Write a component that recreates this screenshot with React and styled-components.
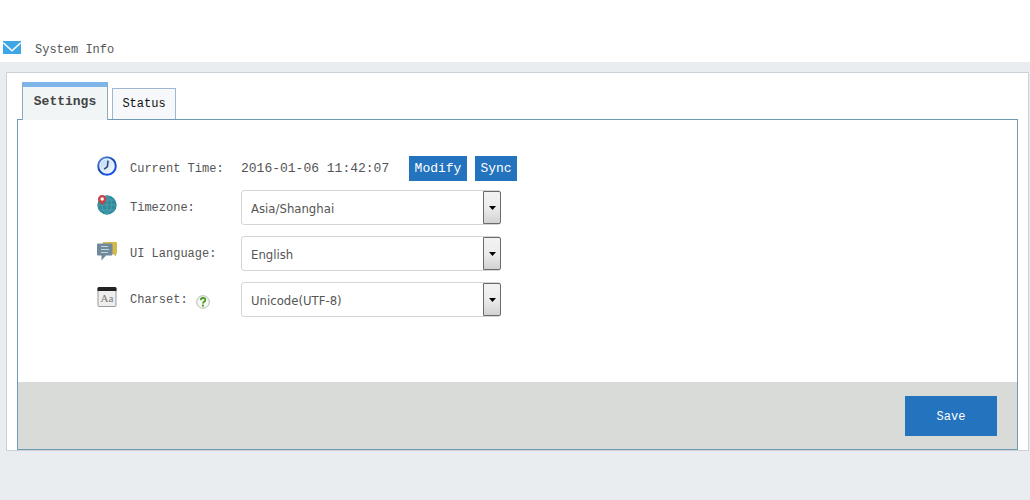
import React, { useState } from "react";
import styled, { createGlobalStyle } from "styled-components";

const mono = `"Liberation Mono", "Courier New", monospace`;

const GlobalStyle = createGlobalStyle`
  * {
    box-sizing: border-box;
  }

  body {
    margin: 0;
    min-height: 100vh;
    background-color: #e9edf0;
    color: #555;
    font-family: ${mono};
    font-size: 12px;
    line-height: 16px;
  }
`;

const Header = styled.header`
  display: flex;
  align-items: center;
  gap: 14px;
  padding: 34px 3px 0;
  height: 62px;
  background-color: #fff;

  svg {
    margin-bottom: 2px;
  }
`;

const Title = styled.h1`
  margin: 4px 0 0;
  font-size: 12px;
  font-weight: normal;
`;

const Card = styled.main`
  margin: 10px 1px 0 6px;
  padding: 9px 10px 0;
  border: 1px solid #ccd3d8;
  background-color: #fff;
`;

const Tabs = styled.div`
  display: flex;
  align-items: flex-end;
  gap: 4px;
  padding-left: 5px;
`;

const Tab = styled.button`
  min-width: ${props => (props.$active ? 86 : 64)}px;
  height: ${props => (props.$active ? 38 : 31)}px;
  margin-bottom: ${props => (props.$active ? -1 : 0)}px;
  padding: ${props => (props.$active ? "0 8px 4px" : "0 8px")};
  border: 1px solid ${props => (props.$active ? "#8fa9bf" : "#9fb6d0")};
  border-top: ${props =>
    props.$active ? "5px solid #7db5e8" : "1px solid #9fb6d0"};
  border-bottom: none;
  background-color: ${props => (props.$active ? "#f1f5f6" : "#f6f8fb")};
  color: ${props => (props.$active ? "#444" : "#111")};
  font-family: ${mono};
  font-size: ${props => (props.$active ? 13 : 12)}px;
  font-weight: ${props => (props.$active ? "bold" : "normal")};
  position: relative;
  cursor: pointer;
`;

const Panel = styled.form`
  border: 1px solid #6f9ab3;
`;

const Fields = styled.div`
  display: flex;
  flex-direction: column;
  gap: 11px;
  padding: 36px 20px 65px 79px;
`;

const Row = styled.div`
  display: grid;
  grid-template-columns: 20px 98px minmax(0, 260px);
  column-gap: 13px;
  align-items: center;
`;

const TimeRow = styled(Row)`
  grid-template-columns: 20px 98px auto;
  margin-bottom: -2px;
`;

const IconBox = styled.span`
  display: flex;
  padding-bottom: 5px;
`;

const Label = styled.div`
  display: flex;
  align-items: center;
  gap: 8px;
  white-space: nowrap;

  svg {
    margin-top: 4px;
  }
`;

const TimeValue = styled.div`
  display: flex;
  align-items: center;
  gap: 8px;
  font-size: 13px;
`;

const Time = styled.output`
  min-width: 160px;
`;

const SmallButton = styled.button`
  min-width: ${props => props.$width}px;
  height: 25px;
  padding: 0 4px;
  border: none;
  background-color: #2473be;
  color: #fff;
  font-family: ${mono};
  font-size: 13px;
  cursor: pointer;
`;

const SelectBox = styled.div`
  position: relative;
`;

const StyledSelect = styled.select`
  appearance: none;
  display: block;
  width: 100%;
  height: 35px;
  padding: 2px 26px 0 9px;
  border: 1px solid #d5d5d5;
  border-radius: 3px;
  background-color: #fff;
  color: #555;
  font-family: Tahoma, "DejaVu Sans Condensed", "Noto Sans", sans-serif;
  font-size: 13px;
`;

const SelectArrow = styled.span`
  position: absolute;
  top: 1px;
  right: 0;
  bottom: 1px;
  width: 18px;
  display: flex;
  align-items: center;
  justify-content: center;
  border: 1px solid #6b6b6b;
  border-radius: 0 2px 2px 0;
  background: linear-gradient(#f3f3f3 0%, #ececec 50%, #d2d2d2 100%);
  pointer-events: none;
`;

const Footer = styled.footer`
  display: flex;
  justify-content: flex-end;
  padding: 14px 20px 13px;
  background-color: #d8dbd8;
`;

const SaveButton = styled.button`
  width: 92px;
  height: 40px;
  padding: 2px 0 0;
  border: none;
  background-color: #2473be;
  color: #fff;
  font-family: ${mono};
  font-size: 12px;
  cursor: pointer;
`;

const MailIcon = () => (
  <svg width="18" height="13" viewBox="0 0 18 13" aria-hidden="true">
    <rect width="18" height="13" fill="#3fa6e6" />
    <path d="M0.3 1.8 L9 9.8 L17.7 1.8" fill="none" stroke="#fff" strokeWidth="1.5" />
  </svg>
);

const ClockIcon = () => (
  <svg width="20" height="20" viewBox="0 0 20 20" aria-hidden="true">
    <defs>
      <linearGradient id="clockRim" x1="0" y1="0" x2="0.7" y2="1">
        <stop offset="0" stopColor="#6e9be0" />
        <stop offset="0.5" stopColor="#1748ad" />
        <stop offset="1" stopColor="#1a50ed" />
      </linearGradient>
      <linearGradient id="clockFace" x1="0" y1="0" x2="1" y2="1">
        <stop offset="0" stopColor="#b9d5f7" />
        <stop offset="1" stopColor="#f6fbff" />
      </linearGradient>
    </defs>
    <circle cx="10" cy="10" r="8.8" fill="#e9f3ff" stroke="url(#clockRim)" strokeWidth="2" />
    <circle cx="10" cy="10" r="6.6" fill="url(#clockFace)" />
    <path d="M11 4.6 L10.4 10.5 L7.2 13.2" fill="none" stroke="#37486f" strokeWidth="1.6" />
  </svg>
);

const GlobeIcon = () => (
  <svg width="20" height="20" viewBox="0 0 20 20" aria-hidden="true">
    <circle cx="10" cy="10" r="9.7" fill="#328b9c" />
    <path
      d="M10 0.5 V19.5 M0.5 10 H19.5 M2.5 5 H17.5 M2.5 15 H17.5 M10 0.5 C3.5 6 3.5 14 10 19.5 M10 0.5 C16.5 6 16.5 14 10 19.5"
      fill="none"
      stroke="#55a9b4"
      strokeWidth="0.7"
    />
    <path
      d="M5.3 10.5 C4 8 1 6.6 1 4.2 A4.2 4.2 0 0 1 9.4 4.2 C9.4 6.6 6.5 8 5.3 10.5Z"
      fill="#c8424b"
    />
    <circle cx="5.2" cy="4" r="1.7" fill="#fff" />
  </svg>
);

const ChatIcon = () => (
  <svg width="20" height="20" viewBox="0 0 20 20" aria-hidden="true">
    <path d="M6 1 H19 Q20 1 20 2 V12 Q20 13 19 13 V15.5 L16 13 H6Z" fill="#d5b94f" />
    <path
      d="M1 2.5 H14.5 Q15.5 2.5 15.5 3.5 V13.5 Q15.5 14.5 14.5 14.5 H9 L4.5 19.5 V14.5 H1 Q0 14.5 0 13.5 V3.5 Q0 2.5 1 2.5Z"
      fill="#70899b"
    />
    <path d="M4 5.5 H11 M4 8.5 H12 M4 11.5 H11" stroke="#c5d5dd" strokeWidth="1" />
  </svg>
);

const CharsetIcon = () => (
  <svg width="20" height="20" viewBox="0 0 20 20" aria-hidden="true">
    <rect x="1" y="0.5" width="18" height="19" rx="1" fill="#eee" stroke="#999" />
    <path d="M0.5 4 V1.5 Q0.5 0 2 0 H18 Q19.5 0 19.5 1.5 V4Z" fill="#222" />
    <text
      x="10"
      y="15"
      textAnchor="middle"
      fontFamily="Liberation Serif, serif"
      fontSize="11"
      fill="#777"
    >
      Aa
    </text>
  </svg>
);

const HelpIcon = () => (
  <svg width="14" height="14" viewBox="0 0 14 14" role="img" aria-label="Help">
    <circle cx="7" cy="7" r="6.3" fill="#f6f9f4" stroke="#b5bab3" strokeWidth="1" />
    <path
      d="M4.6 5.2 Q4.8 3 7 3 Q9.4 3 9.4 5 Q9.4 6.2 8 6.9 Q7 7.4 7 8.6"
      fill="none"
      stroke="#4b9a28"
      strokeWidth="1.8"
    />
    <circle cx="7" cy="10.7" r="1.1" fill="#4b9a28" />
  </svg>
);

const fields = [
  {
    id: "timezone",
    label: "Timezone:",
    icon: <GlobeIcon />,
    options: ["Asia/Shanghai"]
  },
  {
    id: "language",
    label: "UI Language:",
    icon: <ChatIcon />,
    options: ["English"]
  },
  {
    id: "charset",
    label: "Charset:",
    icon: <CharsetIcon />,
    options: ["Unicode(UTF-8)"],
    help: true
  }
];

function SelectField({ id, label, icon, options, help }) {
  return (
    <Row>
      <IconBox>{icon}</IconBox>
      <Label>
        <label htmlFor={id}>{label}</label>
        {help && <HelpIcon />}
      </Label>
      <SelectBox>
        <StyledSelect id={id}>
          {options.map(option => (
            <option key={option}>{option}</option>
          ))}
        </StyledSelect>
        <SelectArrow>
          <svg width="7" height="4" viewBox="0 0 7 4" aria-hidden="true">
            <path d="M0 0 H7 L3.5 4Z" fill="#000" />
          </svg>
        </SelectArrow>
      </SelectBox>
    </Row>
  );
}

export default function App() {
  const [tab, setTab] = useState("Settings");

  return (
    <>
      <GlobalStyle />
      <Header>
        <MailIcon />
        <Title>System Info</Title>
      </Header>
      <Card>
        <Tabs role="tablist">
          {["Settings", "Status"].map(name => (
            <Tab
              key={name}
              type="button"
              role="tab"
              aria-selected={tab === name}
              $active={tab === name}
              onClick={() => setTab(name)}
            >
              {name}
            </Tab>
          ))}
        </Tabs>
        <Panel onSubmit={e => e.preventDefault()}>
          <Fields>
            <TimeRow>
              <IconBox>
                <ClockIcon />
              </IconBox>
              <Label>
                <label htmlFor="time">Current Time:</label>
              </Label>
              <TimeValue>
                <Time id="time">2016-01-06 11:42:07</Time>
                <SmallButton type="button" $width={58}>
                  Modify
                </SmallButton>
                <SmallButton type="button" $width={42}>
                  Sync
                </SmallButton>
              </TimeValue>
            </TimeRow>
            {fields.map(field => (
              <SelectField key={field.id} {...field} />
            ))}
          </Fields>
          <Footer>
            <SaveButton type="submit">Save</SaveButton>
          </Footer>
        </Panel>
      </Card>
    </>
  );
}
